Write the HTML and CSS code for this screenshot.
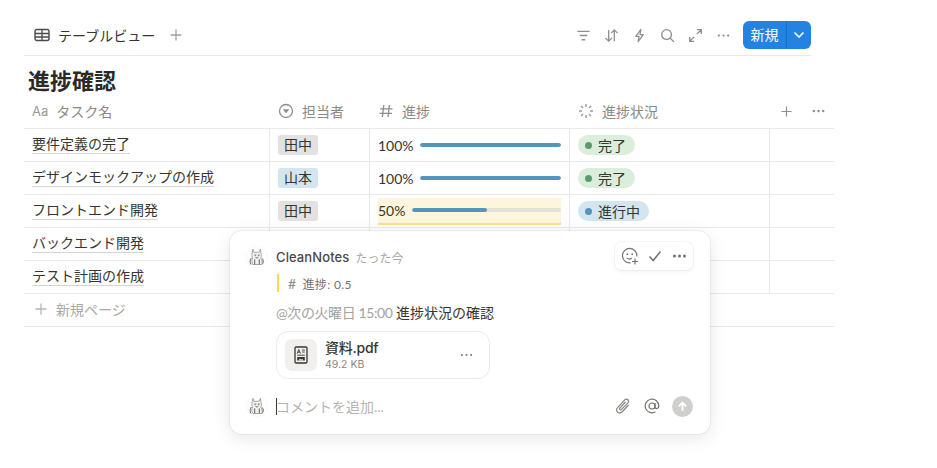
FILE: index.html
```html
<!DOCTYPE html>
<html lang="ja">
<head>
<meta charset="utf-8">
<title>進捗確認</title>
<link rel="stylesheet" href="styles.css">
</head>
<body>
<svg class="defs" width="0" height="0" aria-hidden="true">
  <defs>
    <symbol id="cat" viewBox="0 0 24 24">
      <circle cx="12" cy="12" r="11.600" fill="#fff" stroke="#f1f1ef" stroke-width=".6"/>
      <path d="M7.500 3.500l1.200 3.500 5.600-.3 1.500-3.200.7 5.500c.6 1.500.4 3-.5 4.200 1.400 1.600 1.900 4.300 1.500 7H7.500c-1.200-1.800-1.700-4.600-.4-7-.9-1.700-.9-3.900-.3-5.600z" fill="#f2f2f0" stroke="#8a8982" stroke-width=".8" stroke-linejoin="round"/>
      <path d="M5.500 13.500c-1.300 1.900-1.500 4.400-.3 6.300M9.500 10h1.200M13.300 10h1.200M10.600 12.500c.8.800 1.800.8 2.600 0M9.500 15v4.500M14.500 15v4.500M18 14c1 1.500 1.200 3.500.4 5" fill="none" stroke="#55544e" stroke-width="1" stroke-linecap="round"/>
    </symbol>
  </defs>
</svg>
<main class="page">
  <header class="toolbar">
    <div class="view-tab">
      <svg class="ic-table" viewBox="0 0 16 14"><rect x="1" y="1.500" width="14" height="11" rx="2" fill="none" stroke="#4a4a48" stroke-width="1.400"/><path d="M1 5.500h14M1 9h14M8 1.500v11" stroke="#4a4a48" stroke-width="1.300"/></svg>
      <span>テーブルビュー</span>
      <svg class="ic-plus-tab" viewBox="0 0 12 12"><path d="M6 .5v11M.5 6h11" stroke="#a3a29e" stroke-width="1.300"/></svg>
    </div>
    <div class="tools">
      <svg class="tool" viewBox="0 0 16 16"><path d="M1.500 3.500h13M4 8h8M6 12.500h4" stroke="#8f8e8a" stroke-width="1.400"/></svg>
      <svg class="tool" viewBox="0 0 16 16"><path d="M5 2v12M1.500 10.500L5 14l3.500-3.500M11 14V2M7.500 5.500L11 2l3.500 3.500" fill="none" stroke="#8f8e8a" stroke-width="1.400"/></svg>
      <svg class="tool" viewBox="0 0 16 16"><path d="M9.500 1.500L4 9h3.500l-1 5.500L12 7H8.500z" fill="none" stroke="#8f8e8a" stroke-width="1.300" stroke-linejoin="round"/></svg>
      <svg class="tool" viewBox="0 0 16 16"><circle cx="7" cy="7" r="5.200" fill="none" stroke="#8f8e8a" stroke-width="1.400"/><path d="M10.700 10.700L14.800 14.800" stroke="#8f8e8a" stroke-width="1.400"/></svg>
      <svg class="tool" viewBox="0 0 16 16"><path d="M9.500 1.800h4.700v4.700M14.200 1.800L9.500 6.500M6.500 14.200H1.800V9.500M1.800 14.200l4.700-4.700" fill="none" stroke="#8f8e8a" stroke-width="1.400"/></svg>
      <svg class="tool" viewBox="0 0 16 16"><circle cx="3" cy="8" r="1.200" fill="#8f8e8a"/><circle cx="8" cy="8" r="1.200" fill="#8f8e8a"/><circle cx="13" cy="8" r="1.200" fill="#8f8e8a"/></svg>
      <div class="new-btn">
        <span class="new-label">新規</span>
        <span class="new-caret"><svg viewBox="0 0 12 8" class="ic-caret"><path d="M1.500 1.500L6 6l4.500-4.500" fill="none" stroke="#fff" stroke-width="1.600"/></svg></span>
      </div>
    </div>
  </header>

  <h1 class="title">進捗確認</h1>

  <div class="table">
    <div class="row head">
      <div class="cell c-name"><span class="aa">Aa</span><span>タスク名</span></div>
      <div class="cell c-user"><svg class="ic-head" viewBox="0 0 16 16"><circle cx="8" cy="8" r="6.500" fill="none" stroke="#8f8e8a" stroke-width="1.300"/><path d="M4.800 6.300h6.400L8 10.500z" fill="#8f8e8a"/></svg><span>担当者</span></div>
      <div class="cell c-prog"><svg class="ic-head" viewBox="0 0 16 16"><path d="M5.800 2L4.400 14M11.400 2L10 14M2 5.800h12.500M1.500 10.300H14" stroke="#8f8e8a" stroke-width="1.300"/></svg><span>進捗</span></div>
      <div class="cell c-status"><svg class="ic-head" viewBox="0 0 16 16"><path d="M8 1v3M8 12v3M1 8h3M12 8h3M3 3l2 2M11 11l2 2M3 13l2-2M11 5l2-2" stroke="#9b9a96" stroke-width="1.400"/></svg><span>進捗状況</span></div>
      <div class="cell c-extra head-actions">
        <svg class="ic-add" viewBox="0 0 12 12"><path d="M6 .5v11M.5 6h11" stroke="#8f8e8a" stroke-width="1.300"/></svg>
        <svg class="ic-dots" viewBox="0 0 14 4"><circle cx="2" cy="2" r="1.300" fill="#8f8e8a"/><circle cx="7" cy="2" r="1.300" fill="#8f8e8a"/><circle cx="12" cy="2" r="1.300" fill="#8f8e8a"/></svg>
      </div>
    </div>

    <div class="row">
      <div class="cell c-name"><span class="task">要件定義の完了</span></div>
      <div class="cell c-user"><span class="tag gray">田中</span></div>
      <div class="cell c-prog"><span class="pct">100%</span><span class="bar"><span class="fill" style="width:100%"></span></span></div>
      <div class="cell c-status"><span class="pill green"><i class="dot"></i>完了</span></div>
      <div class="cell c-extra"></div>
    </div>
    <div class="row">
      <div class="cell c-name"><span class="task">デザインモックアップの作成</span></div>
      <div class="cell c-user"><span class="tag blue">山本</span></div>
      <div class="cell c-prog"><span class="pct">100%</span><span class="bar"><span class="fill" style="width:100%"></span></span></div>
      <div class="cell c-status"><span class="pill green"><i class="dot"></i>完了</span></div>
      <div class="cell c-extra"></div>
    </div>
    <div class="row">
      <div class="cell c-name"><span class="task">フロントエンド開発</span></div>
      <div class="cell c-user"><span class="tag gray">田中</span></div>
      <div class="cell c-prog"><div class="highlight"><span class="pct">50%</span><span class="bar"><span class="fill" style="width:50%"></span></span></div></div>
      <div class="cell c-status"><span class="pill sky"><i class="dot"></i>進行中</span></div>
      <div class="cell c-extra"></div>
    </div>
    <div class="row">
      <div class="cell c-name"><span class="task">バックエンド開発</span></div>
      <div class="cell c-user"></div>
      <div class="cell c-prog"></div>
      <div class="cell c-status"></div>
      <div class="cell c-extra"></div>
    </div>
    <div class="row">
      <div class="cell c-name"><span class="task">テスト計画の作成</span></div>
      <div class="cell c-user"></div>
      <div class="cell c-prog"></div>
      <div class="cell c-status"></div>
      <div class="cell c-extra"></div>
    </div>
    <div class="new-page">
      <svg class="ic-plus-new" viewBox="0 0 12 12"><path d="M6 .5v11M.5 6h11" stroke="#b5b4b0" stroke-width="1.300"/></svg>
      <span>新規ページ</span>
    </div>
  </div>
</main>

<aside class="panel">
  <div class="actions">
    <svg class="act-smile" viewBox="0 0 18 18"><path d="M15.800 9.500A7.200 7.200 0 1 0 9.500 15.800" fill="none" stroke="#73726e" stroke-width="1.200"/><circle cx="6.300" cy="7.200" r=".9" fill="#73726e"/><circle cx="11.200" cy="7.200" r=".9" fill="#73726e"/><path d="M5.800 10.800c1.500 1.500 3.500 1.500 5 .2" fill="none" stroke="#73726e" stroke-width="1.100"/><path d="M14 11.500v6M11 14.500h6" stroke="#73726e" stroke-width="1.200"/></svg>
    <svg class="act-check" viewBox="0 0 14 12"><path d="M1.500 6.500L5.200 10.500 12.500 1.500" fill="none" stroke="#73726e" stroke-width="1.500"/></svg>
    <svg class="act-dots" viewBox="0 0 14 4"><circle cx="2" cy="2" r="1.500" fill="#73726e"/><circle cx="7" cy="2" r="1.500" fill="#73726e"/><circle cx="12" cy="2" r="1.500" fill="#73726e"/></svg>
  </div>
  <div class="author">
    <svg class="avatar"><use href="#cat"/></svg>
    <span class="name">CleanNotes</span>
    <span class="time">たった今</span>
  </div>
  <div class="quote"><span class="hash">#</span><span>進捗: 0.5</span></div>
  <p class="message"><span class="mention">@次の火曜日 15:00</span> 進捗状況の確認</p>
  <div class="file">
    <div class="file-icon">
      <svg viewBox="0 0 14 18" class="ic-file"><rect x="1" y="1" width="12" height="16" rx="1.200" fill="none" stroke="#37352f" stroke-width="1.300"/><path d="M3.200 7.500L4.800 3.500 6.400 7.500M3.800 6.200h2M8 4h2.800M8 6h2.800M3.200 9.200h7.600" fill="none" stroke="#37352f" stroke-width=".9"/><path d="M3.200 11h7.600v3.500H3.200z" fill="#37352f"/><path d="M4.500 14.500l1.500-2 1.200 1.200 1-.9 1.300 1.700z" fill="#f1f0ee"/></svg>
    </div>
    <div class="file-meta">
      <div class="file-name">資料.pdf</div>
      <div class="file-size">49.2 KB</div>
    </div>
    <svg class="file-dots" viewBox="0 0 14 4"><circle cx="2" cy="2" r="1.100" fill="#73726e"/><circle cx="7" cy="2" r="1.100" fill="#73726e"/><circle cx="12" cy="2" r="1.100" fill="#73726e"/></svg>
  </div>
  <div class="composer">
    <svg class="avatar"><use href="#cat"/></svg>
    <span class="input"><i class="cursor"></i>コメントを追加...</span>
    <svg class="ic-clip" viewBox="0 0 16 18"><path d="M13.500 8l-6 6.500c-1.500 1.600-3.800 1.800-5 .6s-1-3.300.5-4.900l6.500-7c1-1.100 2.500-1.300 3.400-.5s.8 2.300-.2 3.400L6.500 12.300c-.5.600-1.300.7-1.700.3s-.4-1.100.2-1.700L10.500 5" fill="none" stroke="#858480" stroke-width="1.200"/></svg>
    <svg class="ic-at" viewBox="0 0 16 16"><circle cx="8" cy="8" r="3" fill="none" stroke="#73726e" stroke-width="1.200"/><path d="M11 5v4.200c0 2 3.800 2 3.800-1.200A6.800 6.800 0 1 0 11.500 13.800" fill="none" stroke="#73726e" stroke-width="1.200"/></svg>
    <span class="send"><svg viewBox="0 0 12 12"><path d="M6 11V2M2 5.800L6 1.800l4 4" fill="none" stroke="#fff" stroke-width="2"/></svg></span>
  </div>
</aside>
</body>
</html>
```

FILE: styles.css
```css
* { box-sizing: border-box; }
html, body { margin: 0; height: 100%; }
body {
  position: relative;
  width: 937px;
  height: 468px;
  overflow: hidden;
  background: #fff;
  color: #37352f;
  font-family: Lato, "Noto Sans CJK JP", sans-serif;
  font-size: 14px;
}
.defs { position: absolute; }
.page { padding: 14px 0 0 24px; width: 834px; }
.toolbar {
  display: flex;
  justify-content: space-between;
  align-items: flex-start;
  width: 787px;
  height: 42px;
  border-bottom: 1px solid #e9e9e7;
  padding-top: 7px;
}
.view-tab { display: flex; align-items: center; height: 28px; padding-left: 10px; color: #37352f; }
.view-tab span { margin-left: 8px; }
.ic-table { width: 16px; height: 14px; }
.ic-plus-tab { width: 12px; height: 12px; margin-left: 15px; }
.tools { display: flex; align-items: center; height: 28px; }
.tool { width: 15px; height: 15px; margin-right: 13px; }
.new-btn {
  display: flex;
  width: 68px;
  height: 28px;
  margin-left: -1px;
  background: #2383e2;
  border-radius: 6px;
  color: #fff;
  overflow: hidden;
}
.new-label { width: 44px; line-height: 27px; text-align: center; border-right: 1px solid #1b6fc4; }
.new-caret { flex: 1; display: flex; align-items: center; justify-content: center; }
.ic-caret { width: 12px; height: 8px; }
.title {
  margin: 0;
  padding: 11px 0 0 4px;
  height: 43px;
  font-size: 22px;
  line-height: 28px;
  font-weight: 700;
  color: #2b2a26;
}
.table { width: 810px; }
.row { display: flex; height: 33px; border-bottom: 1px solid #e9e9e7; }
.row.head { height: 30px; color: #8a8984; }
.cell { display: flex; align-items: center; padding: 0 8px; border-right: 1px solid #e9e9e7; flex: none; }
.head .cell { border-right: 0; padding-bottom: 5px; }
.c-name { width: 246px; }
.c-user { width: 100px; }
.c-prog { width: 200px; }
.c-status { width: 200px; }
.c-extra { width: 64px; border-right: 0; }
.row:not(.head) .c-name { padding-bottom: 2px; }
.aa { font-family: Inter, sans-serif; font-size: 13px; color: #9b9a96; margin-right: 8px; }
.ic-head { width: 16px; height: 16px; margin-right: 8px; flex: none; }
.head-actions { justify-content: flex-start; padding-left: 11px; }
.ic-add { width: 11px; height: 11px; }
.ic-dots { width: 13px; height: 4px; margin-left: 20px; }
.task { border-bottom: 1px solid #d6d5d2; line-height: 19px; color: #37352f; }
.tag { height: 20px; line-height: 19px; padding: 0 6px; border-radius: 3px; }
.tag.gray { background: #e3e2e0; }
.tag.blue { background: #d3e5ef; }
.pct { flex: none; width: 42px; font-size: 14px; color: #37352f; }
.bar { flex: 1; height: 4px; border-radius: 2px; background: #e3e0d8; overflow: hidden; display: block; }
.fill { display: block; height: 100%; background: #5296bf; border-radius: 2px; }
.highlight {
  flex: 1;
  display: flex;
  align-items: center;
  height: 27px;
  background: #fdf6dc;
  border-bottom: 2px solid #fde08c;
}
.highlight .pct { width: 34px; }
.pill {
  display: inline-flex;
  align-items: center;
  height: 20px;
  padding: 0 9px 1px 7px;
  border-radius: 10px;
  color: #37352f;
}
.dot { width: 7px; height: 7px; border-radius: 50%; margin: 1px 6px 0 0; flex: none; }
.pill.green { background: #dbeddb; }
.pill.green .dot { background: #5d9a72; }
.pill.sky { background: #d3e5ef; }
.pill.sky .dot { background: #5296bf; }
.new-page {
  display: flex;
  align-items: center;
  height: 33px;
  padding: 0 0 2px 11px;
  border-bottom: 1px solid #e9e9e7;
  color: #a9a8a4;
}
.ic-plus-new { width: 12px; height: 12px; margin-right: 9px; }
.panel {
  position: absolute;
  left: 230px;
  top: 231px;
  width: 480px;
  height: 203px;
  padding: 16px 17px 0 16px;
  background: #fff;
  border-radius: 12px;
  box-shadow: 0 0 0 1px rgba(15,15,15,.05), 0 4px 18px rgba(15,15,15,.1);
}
.actions {
  position: absolute;
  right: 17px;
  top: 11px;
  width: 78px;
  height: 28px;
  display: flex;
  align-items: center;
  padding-left: 6px;
  background: #fff;
  border-radius: 7px;
  box-shadow: 0 0 0 1px rgba(15,15,15,.035), 0 2px 5px rgba(15,15,15,.05);
}
.act-smile { width: 18px; height: 18px; }
.act-check { width: 14px; height: 12px; margin-left: 9px; }
.act-dots { width: 15px; height: 4px; margin-left: 10px; }
.author { display: flex; align-items: center; height: 20px; }
.avatar { width: 22px; height: 22px; flex: none; }
.name { margin-left: 8px; font-family: Inter, sans-serif; font-size: 13px; font-weight: 500; letter-spacing: .1px; color: #4a4945; }
.time { margin-left: 6px; font-size: 12px; color: #aaa9a5; }
.quote {
  display: flex;
  align-items: center;
  margin: 7px 0 0 31px;
  padding-left: 9px;
  height: 18px;
  border-left: 2px solid #fcd84f;
  font-size: 12px;
  letter-spacing: .35px;
  color: #73726e;
}
.hash { margin-right: 6px; font-size: 14px; color: #8a8984; }
.message { margin: 11px 0 0 30px; line-height: 20px; font-size: 14px; color: #37352f; }
.mention { color: #a3a29e; letter-spacing: -.4px; }
.file {
  display: flex;
  align-items: center;
  width: 214px;
  height: 48px;
  margin: 8px 0 0 30px;
  padding: 0 16px 0 8px;
  border: 1px solid #ebebe9;
  border-radius: 12px;
}
.file-icon {
  display: flex;
  align-items: center;
  justify-content: center;
  width: 32px;
  height: 32px;
  background: #f1f0ee;
  border-radius: 7px;
  flex: none;
}
.ic-file { width: 14px; height: 18px; }
.file-meta { margin-left: 8px; flex: 1; }
.file-name { font-family: Inter, "Noto Sans CJK JP", sans-serif; font-size: 14px; font-weight: 500; line-height: 18px; letter-spacing: -.25px; color: #37352f; }
.file-size { font-family: Inter, sans-serif; font-size: 10.500px; line-height: 14px; margin-top: 1px; color: #8a8984; }
.file-dots { width: 13px; height: 4px; flex: none; }
.composer { display: flex; align-items: center; height: 24px; margin-top: 15px; }
.input { flex: 1; display: flex; align-items: center; margin-left: 8px; color: #b5b4b0; }
.cursor { width: 1px; height: 17px; background: #37352f; margin-right: -1px; }
.ic-clip { width: 16px; height: 18px; margin-right: 13px; }
.ic-at { width: 16px; height: 16px; margin-right: 12px; }
.send {
  display: flex;
  align-items: center;
  justify-content: center;
  width: 21px;
  height: 21px;
  border-radius: 50%;
  background: #cfcfcd;
}
.send svg { width: 11px; height: 11px; }
```
